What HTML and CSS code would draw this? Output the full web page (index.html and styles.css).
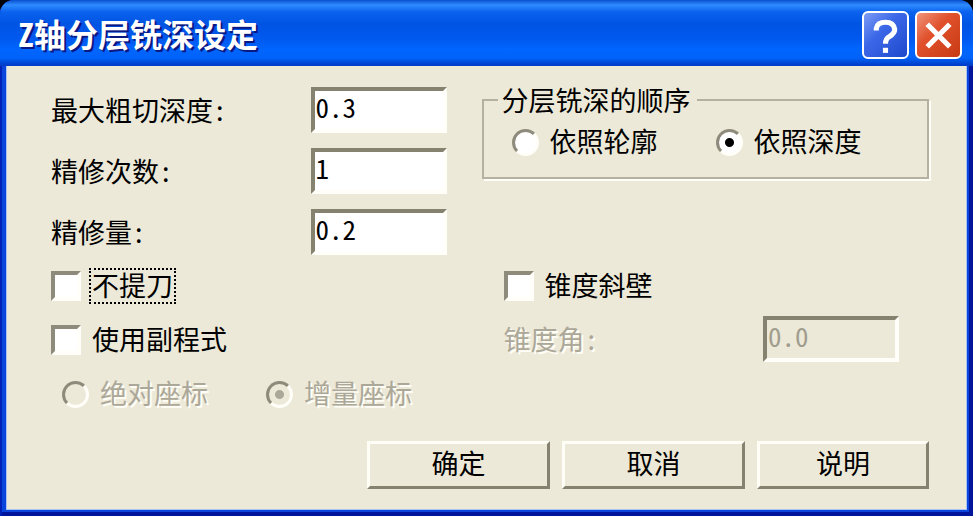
FILE: index.html
```
<!DOCTYPE html>
<html lang="zh-CN">
  <head>
    <meta charset="UTF-8" />
    <meta name="viewport" content="width=device-width, initial-scale=1.0" />
    <title>Z轴分层铣深设定</title>

    <link rel="stylesheet" href="styles.css">
  </head>
  <body>
    <form class="dialog">
      <header class="title-bar">
        <h1>Z轴分层铣深设定</h1>
        <button type="button" class="caption-button help" aria-label="帮助">
          <svg viewBox="0 0 42 42">
            <path d="M12 16V14Q13 8 21 8T30 15Q30 19 25 22Q21 24 21 29" />
            <path d="M21 33V38" />
          </svg>
        </button>
        <button type="button" class="caption-button close" aria-label="关闭">
          <svg viewBox="0 0 42 42">
            <path d="M10 10L32 32M32 10L10 32" />
          </svg>
        </button>
      </header>

      <main class="content">
        <div class="settings">
          <section class="fields">
            <div class="field">
              <label for="max-depth">最大粗切深度:</label>
              <input type="text" id="max-depth" value="0.3" />
            </div>
            <div class="field">
              <label for="finish-count">精修次数:</label>
              <input type="text" id="finish-count" value="1" />
            </div>
            <div class="field">
              <label for="finish-amount">精修量:</label>
              <input type="text" id="finish-amount" value="0.2" />
            </div>
          </section>

          <fieldset class="order">
            <legend>分层铣深的顺序</legend>
            <div class="radio-pair">
              <label class="option"><input type="radio" name="order" /><span>依照轮廓</span></label>
              <label class="option"><input type="radio" name="order" checked /><span>依照深度</span></label>
            </div>
          </fieldset>

          <section class="options">
            <label class="option"><input type="checkbox" /><span class="focused">不提刀</span></label>
            <label class="option"><input type="checkbox" /><span>使用副程式</span></label>
            <div class="radio-pair indented">
              <label class="option disabled"><input type="radio" name="coords" disabled /><span>绝对座标</span></label>
              <label class="option disabled"><input type="radio" name="coords" checked disabled /><span>增量座标</span></label>
            </div>
          </section>

          <section class="taper">
            <label class="option"><input type="checkbox" /><span>锥度斜壁</span></label>
            <div class="field disabled">
              <label for="taper-angle">锥度角:</label>
              <input type="text" id="taper-angle" value="0.0" disabled />
            </div>
          </section>
        </div>

        <footer class="actions">
          <button type="button">确定</button>
          <button type="button">取消</button>
          <button type="button">说明</button>
        </footer>
      </main>
    </form>
  </body>
</html>
```
FILE: styles.css
```
* {
  box-sizing: border-box;
}

body {
  margin: 0;
  background: #000;
  color: #000;
  font-family: "Noto Sans CJK SC", sans-serif;
  font-size: 27px;
  line-height: 28px;
  /* half-width latin, so digits and colons take half a character */
  font-feature-settings: "hwid";
}

input,
button {
  font: inherit;
  font-feature-settings: inherit;
  color: inherit;
}

.dialog {
  display: flex;
  flex-direction: column;
  min-height: 100vh;
  padding: 0 6px 6px;
  border-radius: 14px 14px 0 0;
  background: #0a45dc;
  box-shadow: inset 2px 0 #0022b8, inset -4px -4px #00159a;
}

/* title bar */
.title-bar {
  display: flex;
  align-items: center;
  gap: 6px;
  height: 66px;
  margin: 0 -6px;
  padding: 4px 11px 0 18px;
  border-radius: 14px 14px 0 0;
  background: linear-gradient(
    #0a50d0 0,
    #2f8cff 5px,
    #0a62ee 12px,
    #0054e3 24px,
    #0058ee 38px,
    #0066ff 50px,
    #0062f8 58px,
    #003dc8 65px
  );
}

.title-bar h1 {
  flex: 1;
  margin: 0;
  padding-bottom: 4px;
  color: #fff;
  font-size: 32px;
  font-weight: 700;
  line-height: 36px;
  text-shadow: 2px 2px #0a1883;
}

.caption-button {
  width: 47px;
  height: 48px;
  padding: 0;
  border: 2px solid #fff;
  border-radius: 6px;
}

.caption-button svg {
  display: block;
  width: 100%;
  fill: none;
  stroke: #fff;
  stroke-width: 5;
}

.help {
  background: linear-gradient(135deg, #7c9cf5, #3c68e8 40%, #1d48cc);
}

.close {
  background: linear-gradient(135deg, #f0957c, #e0512c 40%, #c63a12);
}

/* dialog body */
.content {
  flex: 1;
  padding: 21px 37px 20px 44px;
  border: 1px solid #a9c4f4;
  border-top: 0;
  background: #ece9d8;
}

.settings {
  display: grid;
  grid-template-columns: 396fr 448fr;
  gap: 16px 35px;
}

.fields {
  display: flex;
  flex-direction: column;
  gap: 15px;
}

.field {
  display: flex;
  align-items: center;
  justify-content: space-between;
}

input[type="text"] {
  width: 136px;
  height: 46px;
  padding: 0 0 8px 1px;
  border: 4px solid;
  border-color: #85826f #fffef8 #fffef8 #85826f;
  border-radius: 0;
  outline: none;
  background: #fff;
}

input[type="text"]:disabled {
  background: #ece9d8;
  color: #a09d8e;
}

.order {
  align-self: start;
  min-width: 0;
  height: 92px;
  margin: 0;
  padding: 14px 0 0 28px;
  border: 2px solid #b4b1a2;
  box-shadow: 2px 2px #fffef6;
}

.order legend {
  margin-left: -14px;
  padding: 0 6px 0 4px;
  line-height: 26px;
}

.radio-pair {
  display: grid;
  grid-template-columns: 204px auto;
  justify-content: start;
}

.indented {
  margin-left: 11px;
}

.option {
  display: flex;
  align-items: center;
  gap: 11px;
}

.options {
  display: flex;
  flex-direction: column;
  gap: 24px;
}

.taper {
  display: flex;
  flex-direction: column;
  gap: 15px;
  padding: 0 30px 0 22px;
}

.disabled {
  color: #aca899;
  text-shadow: 2px 2px #fffef6;
}

input[type="checkbox"],
input[type="radio"] {
  flex: none;
  appearance: none;
  margin: 0;
  border: 4px solid;
  border-color: #8e8b7c #fffef8 #fffef8 #8e8b7c;
  background: #fff;
}

input[type="checkbox"] {
  width: 30px;
  height: 30px;
}

input[type="radio"] {
  width: 27px;
  height: 27px;
  border-width: 3px;
  border-radius: 50%;
}

input[type="radio"]:checked {
  background: radial-gradient(circle, #000 4px, #fff 5px);
}

input[type="radio"]:disabled {
  background: #ece9d8;
}

input[type="radio"]:checked:disabled {
  background: radial-gradient(circle, #aca899 4px, #ece9d8 5px);
}

.option span {
  padding-bottom: 2px;
}

.focused {
  outline: 2px dotted #000;
  outline-offset: 1px;
}

/* buttons */
.actions {
  display: flex;
  justify-content: flex-end;
  gap: 12px;
  margin-top: 32px;
}

.actions button {
  width: 183px;
  height: 48px;
  padding: 0 0 4px;
  border: 3px solid;
  border-color: #fffef6 #85826f #85826f #fffef6;
  background: #ece9d8;
}

.actions button:last-child {
  width: 172px;
}
```
